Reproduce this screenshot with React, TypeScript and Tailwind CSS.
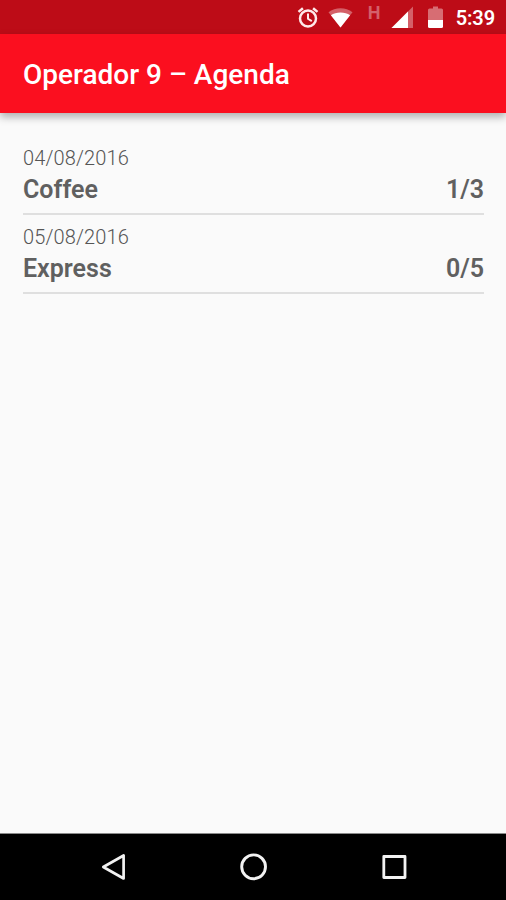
interface AgendaItem {
  date: string
  name: string
  done: number
  total: number
}

const items: AgendaItem[] = [
  { date: '04/08/2016', name: 'Coffee', done: 1, total: 3 },
  { date: '05/08/2016', name: 'Express', done: 0, total: 5 },
]

function StatusBar() {
  return (
    <div className="flex h-[34px] shrink-0 items-start justify-end bg-[#bd0c17] pr-[11px] text-white">
      {/* Alarm */}
      <svg className="mt-[7px] mr-[9px] h-[22px] w-[22px]" viewBox="0 0 22 22" fill="none" stroke="#ffe9e9" strokeWidth="2.5">
        <circle cx="11" cy="11.500" r="8" />
        <path d="M11 6.500v5.300l3.800 2.400" strokeWidth="2" />
        <path d="M1.500 4.900l4.400-3.700M20.500 4.900l-4.400-3.700" />
      </svg>
      {/* Wifi */}
      <svg className="mt-[8px] mr-[15px] h-[20px] w-[25px]" viewBox="0 0 25 20">
        <path d="M12.500 19.500L0.500 4.200C4 1.500 8 0.300 12.500 0.300s8.500 1.200 12 3.900z" fill="#fff" fillOpacity="0.35" />
        <path d="M12.500 19.500L2.900 7.200C5.500 5.400 8.800 4.600 12.500 4.600s7 0.800 9.600 2.600z" fill="#fff" />
      </svg>
      <span className="mt-[3px] mr-[10px] w-[13px] text-center text-[18px] leading-[20px] font-bold text-[#d4606a]">
        H
      </span>
      {/* Signal */}
      <svg className="mt-[6px] mr-[15px] h-[22px] w-[22px]" viewBox="0 0 22 22">
        <path d="M0.500 22L22 0.500V22z" fill="#fff" fillOpacity="0.35" />
        <path d="M0.500 22L17 5.500V22z" fill="#fff" />
      </svg>
      {/* Battery */}
      <svg className="mt-[6px] mr-[13px] h-[22px] w-[15px]" viewBox="0 0 15 22">
        <path d="M5 0.500h5v2h3.500q1.500 0 1.500 1.500V14H0V4Q0 2.500 1.500 2.500H5z" fill="#fff" fillOpacity="0.4" />
        <path d="M0 14h15v6.500q0 1.500-1.500 1.500h-12Q0 22 0 20.500z" fill="#fff" />
      </svg>
      <span className="mt-[6px] text-[20px] leading-[24px] font-semibold tracking-[-0.1px]">5:39</span>
    </div>
  )
}

function AgendaRow({ item }: { item: AgendaItem }) {
  return (
    <li className="h-[79px] border-b-2 border-[#dfdfdf] pt-[10px]">
      <p className="text-[20px] leading-[24px] font-light tracking-[0.13px] text-[#555555]">{item.date}</p>
      <div className="mt-1 flex justify-between text-[25px] leading-[32px] font-semibold text-[#606060]">
        <span>{item.name}</span>
        <span>{item.done}/{item.total}</span>
      </div>
    </li>
  )
}

function NavBar() {
  return (
    <nav className="flex h-[67px] shrink-0 items-center justify-between border-t border-[#8a8a8a] bg-black pr-[96px] pl-[98px]">
      <svg className="h-8 w-8" viewBox="0 0 32 32" fill="none" stroke="#f2f2f2" strokeWidth="2.7" strokeLinejoin="round">
        <path d="M25.600 4.500v23L5.300 16z" />
      </svg>
      <svg className="h-8 w-8" viewBox="0 0 32 32" fill="none" stroke="#f2f2f2" strokeWidth="2.9">
        <circle cx="15.600" cy="15.800" r="11.900" />
      </svg>
      <svg className="h-8 w-8" viewBox="0 0 32 32" fill="none" stroke="#f2f2f2" strokeWidth="2.8" strokeLinejoin="round">
        <path d="M5.800 5.500h21.200v21H5.800z" />
      </svg>
    </nav>
  )
}

export default function App() {
  return (
    <div className="flex h-[900px] w-[506px] flex-col overflow-hidden bg-[#fafafa] font-['Roboto',sans-serif]">
      <StatusBar />
      <header className="flex h-[79px] shrink-0 items-center bg-[#fb0f1f] px-[23px] shadow-[0_4px_8px_rgba(0,0,0,0.3)]">
        <h1 className="pt-[3px] text-[28px] font-medium text-white">Operador 9 – Agenda</h1>
      </header>
      <main className="flex-1 pt-[23px] pr-[22px] pl-[23px]">
        <ul>
          {items.map((item) => (
            <AgendaRow key={item.date} item={item} />
          ))}
        </ul>
      </main>
      <NavBar />
    </div>
  )
}
